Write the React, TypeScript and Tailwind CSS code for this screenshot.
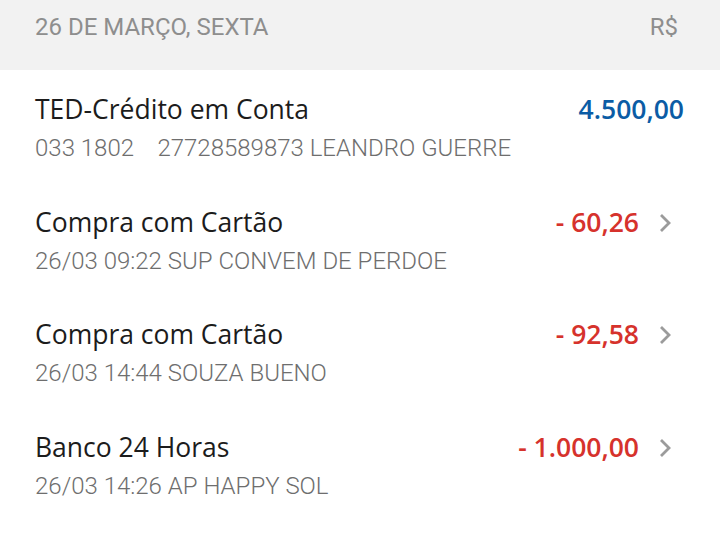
import React from 'react';

type Item = {
    title: string;
    detail: string;
    amount: string;
    credit?: boolean;
    link?: boolean;
};

const items: Item[] = [
    { title: 'TED-Crédito em Conta', detail: '033 1802\u00a0\u00a0\u00a0\u00a027728589873 LEANDRO GUERRE', amount: '4.500,00', credit: true },
    { title: 'Compra com Cartão', detail: '26/03 09:22 SUP CONVEM DE PERDOE', amount: '- 60,26', link: true },
    { title: 'Compra com Cartão', detail: '26/03 14:44 SOUZA BUENO', amount: '- 92,58', link: true },
    { title: 'Banco 24 Horas', detail: '26/03 14:26 AP HAPPY SOL', amount: '- 1.000,00', link: true },
];

function Chevron() {
    return (
        <svg width="14" height="22" viewBox="0 0 14 22" className="ml-[19px] mr-[12px]">
            <path d="M3 3 L11 11 L3 19" fill="none" stroke="#9b9b9b" strokeWidth="2.8" />
        </svg>
    );
}

export default function App() {
    return (
        <div className="w-[720px] h-[536px] bg-white overflow-hidden">
            <div className="h-[70px] bg-[#f2f2f2] flex justify-between items-start pt-[12px] pl-[35px] pr-[42px] text-[24px] leading-[30px] text-[#8e8e8e] font-['Roboto',sans-serif]">
                <span>26 DE MARÇO, SEXTA</span>
                <span>R$</span>
            </div>
            {items.map((it, i) => (
                <div key={i} className="h-[112.5px] pt-[21px] pl-[35px] pr-[36px]">
                    <div className="flex justify-between items-center h-[38px] font-['Open_Sans',sans-serif]">
                        <span className="text-[26.5px] font-medium text-[#1c1c1c]">{it.title}</span>
                        <div className="flex items-center">
                            <span className={`text-[26.5px] font-semibold ${it.credit ? 'text-[#0b5ca5]' : 'text-[#d6322c]'}`}>{it.amount}</span>
                            {it.link && <Chevron />}
                        </div>
                    </div>
                    <div className="h-[38px] flex items-center text-[24px] font-light text-[#6e6e6e] font-['Roboto',sans-serif]">{it.detail}</div>
                </div>
            ))}
        </div>
    );
}
